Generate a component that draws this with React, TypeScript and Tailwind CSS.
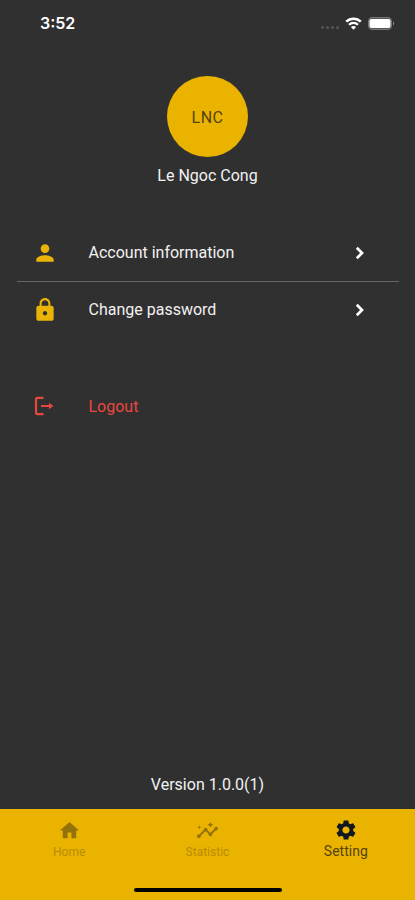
import type { ReactNode } from "react";
import { MdHome, MdInsights, MdLock, MdPerson, MdSettings } from "react-icons/md";

type MenuItemProps = {
  icon: ReactNode;
  label: string;
};

// Time, signal, wifi and battery
const StatusBar = () => (
  <div className="flex h-[46px] items-center justify-between pr-[20px] pl-10">
    <span className="font-['Inter',sans-serif] text-[16px] leading-none font-semibold text-white">
      3:52
    </span>
    <div className="flex items-center">
      <div className="mt-[8px] mr-[6px] flex gap-[2px]">
        <span className="h-[3px] w-[3px] rounded-full bg-[#555]" />
        <span className="h-[3px] w-[3px] rounded-full bg-[#555]" />
        <span className="h-[3px] w-[3px] rounded-full bg-[#555]" />
        <span className="h-[3px] w-[3px] rounded-full bg-[#555]" />
      </div>
      <svg width="17" height="13" viewBox="0 0 17 13" fill="none">
        <path d="M1.2 4.7a10.4 10.4 0 0 1 14.6 0" stroke="#fff" strokeWidth="2.5" />
        <path d="M4 7.8a6.4 6.4 0 0 1 9 0" stroke="#fff" strokeWidth="2.2" />
        <path d="M8.5 12.8 5.9 10.1a3.8 3.8 0 0 1 5.2 0z" fill="#fff" />
      </svg>
      <svg className="ml-[6px]" width="27" height="13" viewBox="0 0 27 13" fill="none">
        <rect x="0.5" y="0.5" width="23" height="12" rx="3.5" fill="#555" stroke="#777" />
        <rect x="1.5" y="2" width="21" height="9" rx="2" fill="#fff" />
        <path d="M25 4.5c1.6.6 1.6 3.4 0 4z" fill="#858585" />
      </svg>
    </div>
  </div>
);

const LogoutIcon = () => (
  <svg width="20" height="20" viewBox="0 0 20 20" fill="none" stroke="#e8473f" strokeWidth="2.2">
    <path d="M9.5 1.8H3.6Q2 1.8 2 3.4V16.6Q2 18.2 3.6 18.2H9.5" />
    <path d="M7 10H16" strokeWidth="2" />
    <path d="M15 6.8 19.4 10 15 13.2z" fill="#e8473f" stroke="none" />
  </svg>
);

const ChevronIcon = () => (
  <svg className="ml-auto" width="10" height="14" viewBox="0 0 10 14" fill="none">
    <path d="M1.8 1.8 7 7 1.8 12.2" stroke="#fff" strokeWidth="2.7" />
  </svg>
);

const MenuItem = ({ icon, label }: MenuItemProps) => (
  <button className="flex h-14 w-full items-center pr-[34.5px] pl-[15px]">
    <span className="w-[57px] text-[#eab308]">{icon}</span>
    <span className="text-[16px] text-[#f2f2f2]">{label}</span>
    <ChevronIcon />
  </button>
);

const BottomTabs = () => (
  <nav className="flex h-[91px] flex-col bg-[#eab300]">
    <div className="grid grid-cols-3">
      <button className="flex flex-col items-center pt-[10px] text-[#94720a]">
        <MdHome size={23} />
        <span className="mt-[2px] text-[12px] leading-[16px] text-[#b58c08]">Home</span>
      </button>
      <button className="flex flex-col items-center pt-[10px] text-[#94720a]">
        <MdInsights size={23} />
        <span className="mt-[2px] text-[12px] leading-[16px] text-[#b58c08]">Statistic</span>
      </button>
      <button className="flex flex-col items-center pt-[9px] text-[#111820]">
        <MdSettings size={24} />
        <span className="mt-px text-[14px] leading-[16px] text-[#54430f]">Setting</span>
      </button>
    </div>
    <div className="mx-auto mt-auto mb-2 h-[4px] w-[148px] rounded-full bg-black" />
  </nav>
);

const App = () => {
  return (
    <div className="flex h-[900px] w-full flex-col overflow-hidden bg-[#303030] font-['Roboto',sans-serif]">
      <StatusBar />

      {/* PROFILE */}
      <div className="flex flex-col items-center pt-[30px]">
        <div className="flex h-[81px] w-[81px] items-center justify-center rounded-full bg-[#eab300] pt-[2px] text-[16px] tracking-[0.5px] text-[#54430f]">
          LNC
        </div>
        <p className="mt-[7px] text-[16px] text-[#f2f2f2]">Le Ngoc Cong</p>
      </div>

      {/* MENU */}
      <div className="mt-[37px] pr-4 pl-[16.5px]">
        <MenuItem icon={<MdPerson size={26} />} label="Account information" />
        <div className="h-px bg-[#676767]" />
        <MenuItem icon={<MdLock size={26} />} label="Change password" />
      </div>
      <button className="mt-10 flex h-14 items-center pl-[34px]">
        <span className="w-[54.5px]">
          <LogoutIcon />
        </span>
        <span className="pt-px text-[16px] text-[#e8473f]">Logout</span>
      </button>

      <p className="mt-auto mb-[12px] text-center text-[16px] text-[#f2f2f2]">Version 1.0.0(1)</p>
      <BottomTabs />
    </div>
  );
};

export default App;
